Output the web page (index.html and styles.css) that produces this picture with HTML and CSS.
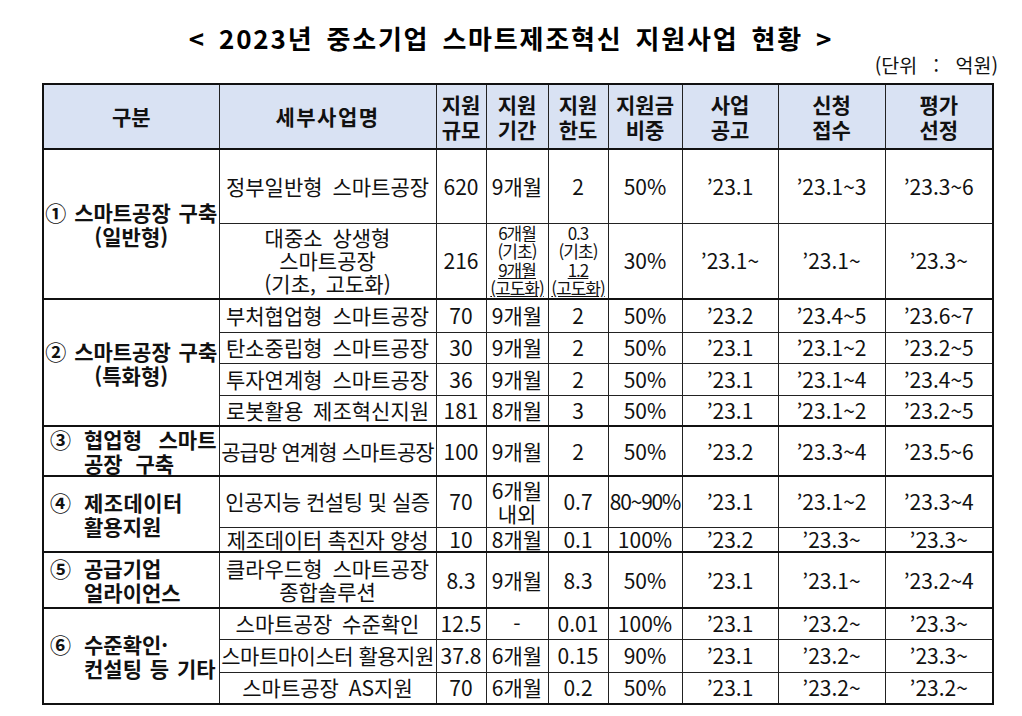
FILE: index.html
```html
<!DOCTYPE html>
<html lang="ko">
<head>
<meta charset="utf-8">
<title>2023년 중소기업 스마트제조혁신 지원사업 현황</title>
<link rel="stylesheet" href="styles.css">
</head>
<body>
<div class="page">
  <h1 class="title">&lt; 2023년 중소기업 스마트제조혁신 지원사업 현황 &gt;</h1>
  <div class="unit">(단위 : 억원)</div>
  <table class="tbl">
    <colgroup>
      <col class="c1"><col class="c2"><col class="c3"><col class="c4"><col class="c5"><col class="c6"><col class="c7"><col class="c8"><col class="c9">
    </colgroup>
    <thead>
      <tr class="h">
        <th>구분</th>
        <th class="wideh">세부사업명</th>
        <th>지원<br>규모</th>
        <th>지원<br>기간</th>
        <th>지원<br>한도</th>
        <th>지원금<br>비중</th>
        <th>사업<br>공고</th>
        <th>신청<br>접수</th>
        <th>평가<br>선정</th>
      </tr>
    </thead>
    <tbody>
      <tr class="r74">
        <td rowspan="2" class="cat"><div class="catc">① 스마트공장 구축<br>(일반형)</div></td>
        <td>정부일반형 스마트공장</td><td>620</td><td>9개월</td><td>2</td><td>50%</td><td>’23.1</td><td>’23.1~3</td><td>’23.3~6</td>
      </tr>
      <tr class="r76">
        <td class="multi">대중소 상생형<br>스마트공장<br>(기초, 고도화)</td><td>216</td>
        <td><div class="tiny">6개월<br>(기초)<br><span class="ul">9개월</span><br><span class="ul">(고도화)</span></div></td>
        <td><div class="tiny">0.3<br>(기초)<br><span class="ul">1.2</span><br><span class="ul">(고도화)</span></div></td>
        <td>30%</td><td>’23.1~</td><td>’23.1~</td><td>’23.3~</td>
      </tr>
      <tr class="g r33">
        <td rowspan="4" class="cat"><div class="catc">② 스마트공장 구축<br>(특화형)</div></td>
        <td>부처협업형 스마트공장</td><td>70</td><td>9개월</td><td>2</td><td>50%</td><td>’23.2</td><td>’23.4~5</td><td>’23.6~7</td>
      </tr>
      <tr class="r31">
        <td>탄소중립형 스마트공장</td><td>30</td><td>9개월</td><td>2</td><td>50%</td><td>’23.1</td><td>’23.1~2</td><td>’23.2~5</td>
      </tr>
      <tr class="r32">
        <td>투자연계형 스마트공장</td><td>36</td><td>9개월</td><td>2</td><td>50%</td><td>’23.1</td><td>’23.1~4</td><td>’23.4~5</td>
      </tr>
      <tr class="r31">
        <td>로봇활용 제조혁신지원</td><td>181</td><td>8개월</td><td>3</td><td>50%</td><td>’23.1</td><td>’23.1~2</td><td>’23.2~5</td>
      </tr>
      <tr class="g r50">
        <td class="cat"><div class="catf"><span class="num">③</span><div class="lines"><div class="just">협업형 스마트</div><div class="wide">공장 구축</div></div></div></td>
        <td class="tightest">공급망 연계형 스마트공장</td><td>100</td><td>9개월</td><td>2</td><td>50%</td><td>’23.2</td><td>’23.3~4</td><td>’23.5~6</td>
      </tr>
      <tr class="g r51">
        <td rowspan="2" class="cat"><div class="catf"><span class="num">④</span><div class="lines"><div class="spaced">제조데이터</div><div>활용지원</div></div></div></td>
        <td class="tighter">인공지능 컨설팅 및 실증</td><td>70</td><td class="multi">6개월<br>내외</td><td>0.7</td><td class="narrow">80~90%</td><td>’23.1</td><td>’23.1~2</td><td>’23.3~4</td>
      </tr>
      <tr class="r25">
        <td class="tight">제조데이터 촉진자 양성</td><td>10</td><td>8개월</td><td>0.1</td><td>100%</td><td>’23.2</td><td>’23.3~</td><td>’23.3~</td>
      </tr>
      <tr class="g r56">
        <td class="cat"><div class="catf"><span class="num">⑤</span><div class="lines"><div>공급기업</div><div>얼라이언스</div></div></div></td>
        <td class="multi">클라우드형 스마트공장<br>종합솔루션</td><td>8.3</td><td>9개월</td><td>8.3</td><td>50%</td><td>’23.1</td><td>’23.1~</td><td>’23.2~4</td>
      </tr>
      <tr class="g r31">
        <td rowspan="3" class="cat"><div class="catf"><span class="num">⑥</span><div class="lines"><div>수준확인·</div><div>컨설팅 등 기타</div></div></div></td>
        <td>스마트공장 수준확인</td><td>12.5</td><td>-</td><td>0.01</td><td>100%</td><td>’23.1</td><td>’23.2~</td><td>’23.3~</td>
      </tr>
      <tr class="r33">
        <td class="tighter">스마트마이스터 활용지원</td><td>37.8</td><td>6개월</td><td>0.15</td><td>90%</td><td>’23.1</td><td>’23.2~</td><td>’23.3~</td>
      </tr>
      <tr class="r32">
        <td>스마트공장 AS지원</td><td>70</td><td>6개월</td><td>0.2</td><td>50%</td><td>’23.1</td><td>’23.2~</td><td>’23.2~</td>
      </tr>
    </tbody>
  </table>
</div>
</body>
</html>
```

FILE: styles.css
```css
* { box-sizing: border-box; }
html, body { margin: 0; padding: 0; background: #fff; }
body {
  color: #111;
  font-family: "Noto Sans CJK KR", "Noto Sans", sans-serif;
}
.page { width: 1022px; }

.title {
  margin: 0;
  padding-top: 22px;
  height: 54px;
  text-align: center;
  font-size: 26px;
  font-weight: 700;
  line-height: 32px;
  letter-spacing: 1.8px;
  word-spacing: 4px;
  color: #000;
}
.unit {
  height: 23px;
  padding-right: 24px;
  text-align: right;
  font-size: 19.5px;
  line-height: 22px;
  word-spacing: 11px;
}

.tbl {
  margin: 6px 0 0 42px;
  width: 950px;
  border-collapse: collapse;
  table-layout: fixed;
  border: 2px solid #111;
  font-size: 21px;
}
.c1 { width: 176px; }
.c2 { width: 217px; }
.c3 { width: 50px; }
.c4 { width: 62px; }
.c5 { width: 60px; }
.c6 { width: 74px; }
.c7 { width: 96px; }
.c8 { width: 107px; }
.c9 { width: 108px; }

.tbl th, .tbl td {
  border: 1px solid #222;
  padding: 0;
  text-align: center;
  vertical-align: middle;
  white-space: nowrap;
  line-height: 23px;
  font-weight: 400;
  word-spacing: 4px;
}
.tbl th {
  background: #d9e2f3;
  font-weight: 700;
  line-height: 25px;
  word-spacing: 0;
}
.tbl th.wideh { letter-spacing: 1.5px; }
.tbl thead th { border-bottom: 2px solid #111; }
.tbl tr.g td { border-top: 2px solid #111; }

.h { height: 65px; }
.r74 { height: 74px; }
.r76 { height: 76px; }
.r33 { height: 33px; }
.r31 { height: 31px; }
.r32 { height: 32px; }
.r50 { height: 50px; }
.r51 { height: 51px; }
.r25 { height: 25px; }
.r56 { height: 56px; }

.tbl td.multi { line-height: 23px; }
.tbl td.narrow { letter-spacing: -1.2px; }
.tbl td.tight { letter-spacing: -0.3px; word-spacing: 0; }
.tbl td.tighter { letter-spacing: -0.5px; word-spacing: 0; }
.tbl td.tightest { letter-spacing: -0.9px; word-spacing: 0; }

.tiny {
  font-size: 17px;
  line-height: 18.5px;
  letter-spacing: -1px;
}
.ul { text-decoration: underline; text-underline-offset: 1px; }

.tbl td.cat {
  font-weight: 700;
  line-height: 24px;
  word-spacing: 2px;
}
.catc { text-align: center; }
.catf {
  display: flex;
  align-items: flex-start;
  text-align: left;
  padding-left: 6px;
  padding-right: 2px;
}
.num { width: 34px; flex: none; }
.lines { flex: 1; }
.just { text-align: justify; text-align-last: justify; }
.wide { word-spacing: 7px; }
.spaced { letter-spacing: 0.4px; }
```
